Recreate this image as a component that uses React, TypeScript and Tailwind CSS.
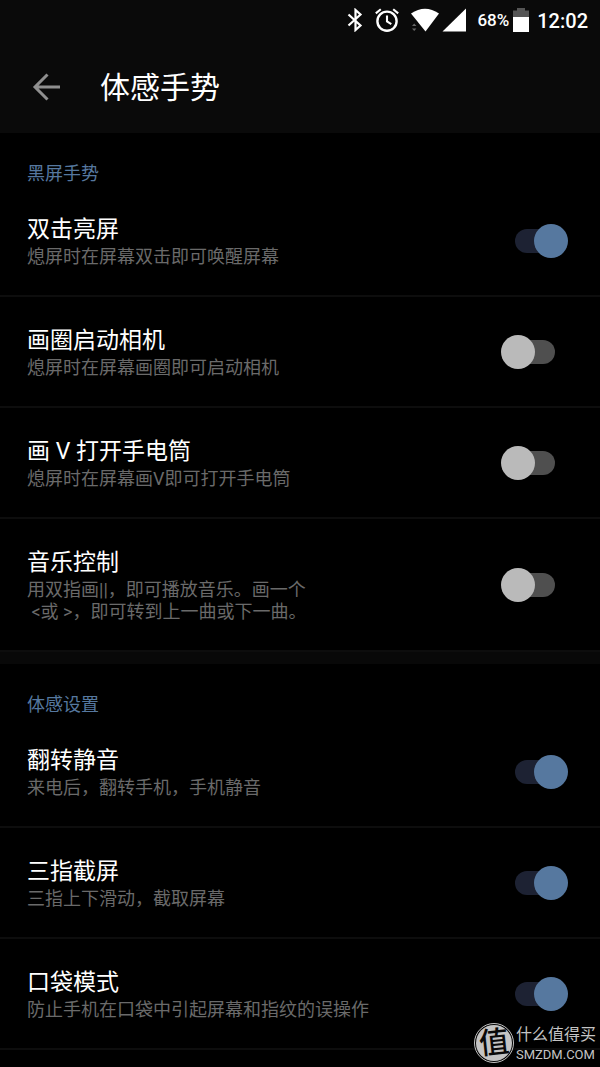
import { useState } from "react";

type Item = { id: string; title: string; desc: string; on: boolean };
type Section = { heading: string; items: Item[] };

const sections: Section[] = [
  {
    heading: "黑屏手势",
    items: [
      { id: "double-tap", title: "双击亮屏", desc: "熄屏时在屏幕双击即可唤醒屏幕", on: true },
      { id: "circle", title: "画圈启动相机", desc: "熄屏时在屏幕画圈即可启动相机", on: false },
      { id: "draw-v", title: "画 V 打开手电筒", desc: "熄屏时在屏幕画V即可打开手电筒", on: false },
      { id: "music", title: "音乐控制", desc: "用双指画||，即可播放音乐。画一个\n <或 >，即可转到上一曲或下一曲。", on: false },
    ],
  },
  {
    heading: "体感设置",
    items: [
      { id: "flip-mute", title: "翻转静音", desc: "来电后，翻转手机，手机静音", on: true },
      { id: "screenshot", title: "三指截屏", desc: "三指上下滑动，截取屏幕", on: true },
      { id: "pocket", title: "口袋模式", desc: "防止手机在口袋中引起屏幕和指纹的误操作", on: true },
    ],
  },
];

function StatusBar() {
  return (
    <div className="flex h-10 items-center justify-end pr-3 text-white">
      <svg className="h-6 w-4" viewBox="0 0 16 24" fill="none" stroke="currentColor" strokeWidth="2.2">
        <path d="M1.500 6.500 13.500 17.500 8.500 22V2l5 4.500L1.500 17.500" />
      </svg>
      <svg className="ml-3 h-6 w-6" viewBox="0 0 24 24" fill="none" stroke="currentColor" strokeWidth="2.4">
        <circle cx="12" cy="13.200" r="9.600" />
        <path d="M12 7.500v6l4.300 2.600M.8 5.400 5.800 1.200M23.200 5.400 18.200 1.200" strokeWidth="2.100" />
      </svg>
      <svg className="ml-2.5 h-6 w-8" viewBox="0 0 32 24" fill="currentColor">
        <path d="M2 5.500Q16-4 30 5.500L16.500 23.500Z" />
        <path d="M3 18 5.200 15.500 7.400 18ZM3 20.500h4.400L5.200 23Z" fill="#666" />
      </svg>
      <svg className="ml-px h-6 w-6" viewBox="0 0 24 24" fill="currentColor">
        <path d="M24 .5v23H.5Z" />
      </svg>
      <span className="ml-[11px] pt-0.5 text-[17px] font-medium">68%</span>
      <svg className="ml-1 h-6 w-4" viewBox="0 0 16 24">
        <path d="M0 2.500h4V0h8v2.500h4V10H0Z" fill="#555" />
        <path d="M0 9h16v15H0Z" fill="#fff" />
      </svg>
      <span className="ml-2 pt-0.5 text-[20px] font-medium">12:02</span>
    </div>
  );
}

function Row({ item }: { item: Item }) {
  const [on, setOn] = useState(item.on);
  return (
    <li className="flex items-center justify-between border-b-2 border-[#0d0d0d] pr-8 pl-[27px]">
      <label htmlFor={item.id} className="pt-[30px] pb-[27px]">
        <span className="block text-[23px] leading-7 text-white">{item.title}</span>
        <span className="mt-0.5 block text-[18px] leading-[22px] whitespace-pre-wrap text-[#6a6a6a]">{item.desc}</span>
      </label>
      <input
        id={item.id}
        type="checkbox"
        role="switch"
        checked={on}
        onChange={(e) => setOn(e.target.checked)}
        className="relative flex h-[34px] w-[67px] shrink-0 appearance-none items-center justify-center before:h-6 before:w-10 before:rounded-full before:bg-[#4f4f4f] after:absolute after:top-0 after:left-0 after:size-[34px] after:rounded-full after:bg-[#bababa] checked:before:bg-[#1d2233] checked:after:right-0 checked:after:left-auto checked:after:bg-[#56789f]"
      />
    </li>
  );
}

function Watermark() {
  return (
    <div className="pointer-events-none absolute right-1 bottom-0.5 flex items-center gap-0.5 text-[#c4c4c4]">
      <div className="flex size-10 items-center justify-center rounded-full border border-[#c4c4c4] p-px">
        <div className="flex size-9 items-center justify-center rounded-full bg-[#c4c4c4] text-[30px] leading-none font-medium text-[#0a0a0a]">
          <span className="-rotate-6">值</span>
        </div>
      </div>
      <div className="pt-1">
        <div className="text-[16px] leading-5">什么值得买</div>
        <div className="text-[13px] leading-5">SMZDM.COM</div>
      </div>
    </div>
  );
}

export default function App() {
  return (
    <div className="relative min-h-screen overflow-hidden bg-black font-[Roboto,'Noto_Sans_CJK_SC',sans-serif]" lang="zh-CN">
      <header className="bg-[#0a0a0a]">
        <StatusBar />
        <div className="flex h-[93px] items-center gap-10 pl-8">
          <button type="button" aria-label="返回" className="text-[#8f8f8f]">
            <svg className="h-7 w-7" viewBox="0 0 28 28" fill="none" stroke="currentColor" strokeWidth="3">
              <path d="M28 14H3M15.500 1.500 3 14l12.500 12.500" />
            </svg>
          </button>
          <h1 className="pt-0.5 text-[30px] leading-10 text-white">体感手势</h1>
        </div>
      </header>
      <main>
        {sections.map((s) => (
          <section key={s.heading} className="border-b-[12px] border-[#080808] last:border-b-0">
            <h2 className="pt-[29px] pl-[27px] text-[18px] leading-6 text-[#56789f]">{s.heading}</h2>
            <ul>
              {s.items.map((item) => (
                <Row key={item.id} item={item} />
              ))}
            </ul>
          </section>
        ))}
      </main>
      <div className="h-4" />
      <Watermark />
    </div>
  );
}
